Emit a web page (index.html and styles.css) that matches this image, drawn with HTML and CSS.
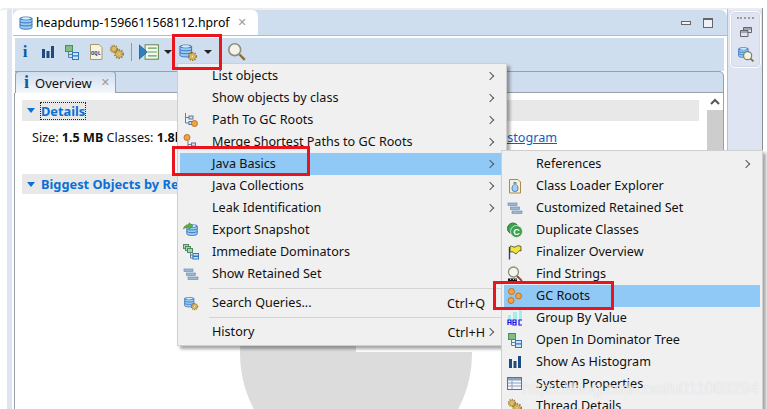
FILE: index.html
```html
<!DOCTYPE html>
<html lang="en">
<head>
    <meta charset="UTF-8">
    <meta name="viewport" content="width=device-width, initial-scale=1.0">
    <title>heapdump-1596611568112.hprof</title>
    <link rel="stylesheet" href="styles.css">
</head>
<body>
    <svg class="defs" width="0" height="0">
        <symbol id="db" viewBox="0 0 16 16">
            <path d="M2 3.500C2 1.500 14 1.500 14 3.500V12.500C14 14.800 2 14.800 2 12.500Z" fill="#9ccbf0" stroke="#1a5fb4" stroke-width=".8"/>
            <path d="M2 6.500C2 8.400 14 8.400 14 6.500M2 9.500C2 11.400 14 11.400 14 9.500M2 3.500C2 5.300 14 5.300 14 3.500" fill="none" stroke="#1a5fb4" stroke-width=".8"/>
            <ellipse cx="8" cy="3.400" rx="4" ry="1.100" fill="#d6eafa"/>
        </symbol>
        <symbol id="gear" viewBox="0 0 16 16">
            <circle cx="8" cy="8" r="5.600" fill="none" stroke="#a07c2c" stroke-width="2.200" stroke-dasharray="2 1.600"/>
            <circle cx="8" cy="8" r="4.400" fill="#edc662" stroke="#8a6a20" stroke-width=".8"/>
            <circle cx="8" cy="8" r="1.700" fill="#fff6dc" stroke="#8a6a20" stroke-width=".7"/>
        </symbol>
        <symbol id="db-gear" viewBox="0 0 18 18">
            <use href="#db" x="0" y="0" width="14" height="16"/>
            <use href="#gear" x="8" y="8" width="10" height="10"/>
        </symbol>
        <symbol id="bars" viewBox="0 0 16 16">
            <path d="M2 5H5V14H2ZM6.500 7H9.500V14H6.500ZM11 2H14V14H11Z" fill="#1f4a7f"/>
        </symbol>
        <symbol id="tree" viewBox="0 0 16 16">
            <rect x="1.500" y="1.500" width="7" height="6" fill="#7fbf7f" stroke="#4e8a6a"/>
            <path d="M4.500 8V13.500H8M4.500 10.500H8" fill="none" stroke="#5f7f9f"/>
            <rect x="8.500" y="8.500" width="6" height="3.500" fill="#cfe4f7" stroke="#2f78c0"/>
            <rect x="8.500" y="12" width="6" height="3.500" fill="#cfe4f7" stroke="#2f78c0"/>
        </symbol>
        <symbol id="gears" viewBox="0 0 16 16">
            <use href="#gear" x="0" y="0" width="10" height="10"/>
            <use href="#gear" x="4" y="4" width="12" height="12"/>
        </symbol>
        <symbol id="path-root" viewBox="0 0 16 16">
            <path d="M2.500 1V11H6M2.500 5.500H6" fill="none" stroke="#5f7f9f"/>
            <rect x="6" y="4" width="4" height="3" fill="#cfe4f7" stroke="#5577a0"/>
            <rect x="6" y="9.500" width="3" height="3" fill="#cfe4f7" stroke="#5577a0"/>
            <circle cx="11.500" cy="11.500" r="3" fill="#f2a34a" stroke="#c0731c"/>
        </symbol>
        <symbol id="path-merge" viewBox="0 0 16 16">
            <circle cx="4" cy="3.500" r="3" fill="#f2a34a" stroke="#c0731c"/>
            <path d="M5 7V15M5 10.500H9" fill="none" stroke="#5f7f9f"/>
            <rect x="8.500" y="9" width="4" height="3" fill="#cfe4f7" stroke="#5577a0"/>
        </symbol>
        <symbol id="retained" viewBox="0 0 16 16">
            <rect x="1" y="3" width="9" height="2.400" fill="#9db8d2" stroke="#5f85aa" stroke-width=".6"/>
            <rect x="3.500" y="7" width="9" height="2.400" fill="#9db8d2" stroke="#5f85aa" stroke-width=".6"/>
            <rect x="5" y="11" width="10" height="2.400" fill="#9db8d2" stroke="#5f85aa" stroke-width=".6"/>
        </symbol>
        <symbol id="export" viewBox="0 0 16 16">
            <use href="#db" x="2" y="0" width="14" height="16"/>
            <path d="M.5 7C1 3.500 4 2.500 6 2.700V.8L10 4 6 7V5C4 5 2 5.500 .5 7Z" fill="#5fb53c" stroke="#3b8a22" stroke-width=".6"/>
        </symbol>
        <symbol id="dominators" viewBox="0 0 16 16">
            <rect x=".5" y=".5" width="5" height="4" fill="#a9d79f" stroke="#4e8a6a"/>
            <rect x="2.500" y="2.500" width="5" height="4" fill="#a9d79f" stroke="#4e8a6a"/>
            <rect x="4.500" y="4.500" width="5" height="4" fill="#a9d79f" stroke="#4e8a6a"/>
            <path d="M7.500 9V14H10M7.500 11H10" fill="none" stroke="#5f7f9f"/>
            <rect x="10" y="9.500" width="5.500" height="2.500" fill="#cfe4f7" stroke="#2f78c0"/>
            <rect x="10" y="12.500" width="5.500" height="2.500" fill="#cfe4f7" stroke="#2f78c0"/>
        </symbol>
        <symbol id="loader" viewBox="0 0 16 16">
            <path d="M2.500 1.500H11L13.500 4V15H2.500Z" fill="#f6efd9" stroke="#a98a4c"/>
            <path d="M7 4.500H9V6.500C11 8 11 10 11 11A3 2.500 0 0 1 5 11C5 10 5 8 7 6.500Z" fill="#a8cfee" stroke="#2f6fae" stroke-width=".8"/>
        </symbol>
        <symbol id="duplicate" viewBox="0 0 16 16">
            <circle cx="6" cy="6.500" r="5.500" fill="#3f9f4f" stroke="#2b7a38"/>
            <circle cx="9.500" cy="9.500" r="6" fill="#3f9f4f" stroke="#e8f3e8" stroke-width=".8"/>
            <text class="glyph-c" x="9.500" y="13">C</text>
        </symbol>
        <symbol id="flag" viewBox="0 0 16 16">
            <path d="M2.500 3V15.500" stroke="#1f4a7f" stroke-width="1.400"/>
            <path d="M3 2.500C5 1 6.500 4 8 3 10 2 11 1 14 2.500V7C12 6 11 8 9 10 7 9 6 7 3 8Z" fill="#f2e43a" stroke="#222" stroke-width=".7"/>
        </symbol>
        <symbol id="strings" viewBox="0 0 16 16">
            <circle cx="6.500" cy="6" r="5" fill="#f3f3ea" stroke="#8d8d80" stroke-width="1.300"/>
            <path d="M10 10L15 15" stroke="#8a4a3a" stroke-width="1.800"/>
            <path d="M1 12.500H10V15.500H1Z" fill="#111"/>
            <path d="M3 13.500H3.800M6 13.500H6.800M8.500 13.500H9.300" stroke="#fff"/>
        </symbol>
        <symbol id="roots" viewBox="0 0 16 16">
            <circle cx="4.500" cy="3.500" r="3" fill="#f2a34a" stroke="#c0731c"/>
            <circle cx="11.500" cy="8" r="3" fill="#f2a34a" stroke="#c0731c"/>
            <circle cx="4" cy="12.500" r="3" fill="#f2a34a" stroke="#c0731c"/>
        </symbol>
        <symbol id="group" viewBox="0 0 16 16">
            <path d="M1 5H4V10H1ZM6 2H10V10H6ZM12 0H15V10H12Z" fill="#a5ecec"/>
            <path d="M1 15V10H4V15M1 12.500H4M6 10H9V15H6ZM6 12.500H9M15 10H12V15H15" fill="none" stroke="#1414e6" stroke-width="1.200"/>
        </symbol>
        <symbol id="table" viewBox="0 0 16 16">
            <rect x=".5" y="1.500" width="14" height="12" fill="#f4f6fa" stroke="#5b7391"/>
            <path d="M1 2H14V4.500H1Z" fill="#8aa2bf"/>
            <path d="M1 7H14M1 10H14M5 4.500V13" stroke="#8aa2bf"/>
        </symbol>
    </svg>

    <div class="window">
        <div class="left-strip"></div>
        <div class="editor">
            <div class="tab-bar">
                <div class="file-tab">
                    <svg class="icon"><use href="#db"/></svg>
                    <span class="file-name">heapdump-1596611568112.hprof</span>
                    <span class="close">&#10005;</span>
                </div>
                <div class="win-btns">
                    <span class="minimize"></span>
                    <span class="maximize"></span>
                </div>
            </div>
            <div class="toolbar">
                <span class="tool tool-info info">i</span>
                <span class="tool tool-bars"><svg class="icon"><use href="#bars"/></svg></span>
                <span class="tool"><svg class="icon"><use href="#tree"/></svg></span>
                <span class="tool">
                    <svg class="icon" viewBox="0 0 16 16">
                        <path d="M2.500 .5H11L14 3.500V15.500H2.500Z" fill="#f6f3e2" stroke="#a89a6c"/>
                        <text class="glyph-oql" x="8" y="11">OQL</text>
                    </svg>
                </span>
                <span class="tool tool-narrow"><svg class="icon"><use href="#gears"/></svg></span>
                <span class="tool-sep"></span>
                <span class="tool">
                    <svg class="icon icon-wide" viewBox="0 0 18 16">
                        <rect x="5.500" y="1.500" width="12" height="13" fill="#f4f8ee" stroke="#6f8f5f"/>
                        <path d="M8 4.500H16M8 8H16M8 11.500H16" stroke="#5fa05f"/>
                        <path d="M0 1.500L7.500 8 0 14.500Z" fill="#2d7fc0" stroke="#1a4f80" stroke-width=".6"/>
                    </svg>
                </span>
                <span class="caret"></span>
                <span class="tool tool-db"><svg class="icon icon-big"><use href="#db-gear"/></svg></span>
                <span class="caret"></span>
                <span class="tool-sep tool-sep-last"></span>
                <span class="tool">
                    <svg class="icon icon-search" viewBox="0 0 16 16">
                        <circle cx="6.500" cy="6.500" r="5" fill="#f3f3ea" stroke="#8d8d80" stroke-width="1.400"/>
                        <path d="M10.500 10.500L15 15" stroke="#8a6a3a" stroke-width="2"/>
                    </svg>
                </span>
            </div>
            <div class="inner-tabs">
                <div class="overview-tab">
                    <span class="info info-small">i</span>
                    <span>Overview</span>
                    <span class="close">&#10005;</span>
                </div>
            </div>
            <div class="content">
                <div class="sections">
                    <div class="section-head section-first">
                        <span class="twist"></span>
                        <span class="section-title focused">Details</span>
                    </div>
                    <div class="size-row">
                        <span>Size: <b>1.5 MB</b> Classes: <b>1.8k</b> Objects: <b>33.9k</b></span>
                        <a class="link" href="#">Histogram</a>
                    </div>
                    <div class="section-head">
                        <span class="twist"></span>
                        <span class="section-title">Biggest Objects by Retained Size</span>
                    </div>
                </div>
                <div class="scrollbar">
                    <div class="scroll-up">
                        <svg width="10" height="7" viewBox="0 0 10 7"><path d="M1 6L5 2 9 6" fill="none" stroke="#555" stroke-width="2"/></svg>
                    </div>
                    <div class="scroll-thumb"></div>
                </div>
            </div>
        </div>
        <div class="side">
            <div class="side-box">
                <span class="grip"></span>
                <svg class="restore" width="12" height="10" viewBox="0 0 12 10">
                    <path d="M3.500 3V.5H11.500V5.500H8M.5 3.500H8V9.500H.5ZM.5 5H8M3.500 2H11.500" fill="none" stroke="#666"/>
                </svg>
                <svg class="side-icon" viewBox="0 0 16 16">
                    <use href="#db" x="0" y="0" width="12" height="14"/>
                    <circle cx="10" cy="10" r="3.800" fill="#f3f3ea" stroke="#7d7d60" stroke-width="1.100"/>
                    <path d="M12.800 12.800L15.500 15.500" stroke="#8a6a3a" stroke-width="1.600"/>
                </svg>
            </div>
        </div>
        <div class="right-edge"></div>
    </div>

    <svg class="pie" width="232" height="64" viewBox="0 0 232 64">
        <clipPath id="pie-clip"><circle cx="116" cy="8" r="116"/></clipPath>
        <path d="M0 0H116V6H232V64H0Z" fill="#dcdcdc" clip-path="url(#pie-clip)"/>
    </svg>

    <div class="menu main-menu">
        <div class="item"><span class="gutter"></span><span class="label">List objects</span><span class="arrow"></span></div>
        <div class="item"><span class="gutter"></span><span class="label">Show objects by class</span><span class="arrow"></span></div>
        <div class="item"><span class="gutter"><svg class="icon"><use href="#path-root"/></svg></span><span class="label">Path To GC Roots</span><span class="arrow"></span></div>
        <div class="item"><span class="gutter"><svg class="icon"><use href="#path-merge"/></svg></span><span class="label">Merge Shortest Paths to GC Roots</span><span class="arrow"></span></div>
        <div class="item active"><span class="gutter"></span><span class="label">Java Basics</span><span class="arrow"></span></div>
        <div class="item"><span class="gutter"></span><span class="label">Java Collections</span><span class="arrow"></span></div>
        <div class="item"><span class="gutter"></span><span class="label">Leak Identification</span><span class="arrow"></span></div>
        <div class="item"><span class="gutter"><svg class="icon"><use href="#export"/></svg></span><span class="label">Export Snapshot</span></div>
        <div class="item"><span class="gutter"><svg class="icon"><use href="#dominators"/></svg></span><span class="label">Immediate Dominators</span></div>
        <div class="item"><span class="gutter"><svg class="icon"><use href="#retained"/></svg></span><span class="label">Show Retained Set</span></div>
        <div class="sep"></div>
        <div class="item"><span class="gutter"><svg class="icon"><use href="#db-gear"/></svg></span><span class="label">Search Queries...</span><span class="shortcut">Ctrl+Q</span><span class="arrow arrow-none"></span></div>
        <div class="sep"></div>
        <div class="item"><span class="gutter"></span><span class="label">History</span><span class="shortcut">Ctrl+H</span><span class="arrow"></span></div>
    </div>

    <div class="menu sub-menu">
        <div class="item"><span class="gutter"></span><span class="label">References</span><span class="arrow"></span></div>
        <div class="item"><span class="gutter"><svg class="icon"><use href="#loader"/></svg></span><span class="label">Class Loader Explorer</span></div>
        <div class="item"><span class="gutter"><svg class="icon"><use href="#retained"/></svg></span><span class="label">Customized Retained Set</span></div>
        <div class="item"><span class="gutter"><svg class="icon"><use href="#duplicate"/></svg></span><span class="label">Duplicate Classes</span></div>
        <div class="item"><span class="gutter"><svg class="icon"><use href="#flag"/></svg></span><span class="label">Finalizer Overview</span></div>
        <div class="item"><span class="gutter"><svg class="icon"><use href="#strings"/></svg></span><span class="label">Find Strings</span></div>
        <div class="item active"><span class="gutter"><svg class="icon"><use href="#roots"/></svg></span><span class="label">GC Roots</span></div>
        <div class="item"><span class="gutter"><svg class="icon"><use href="#group"/></svg></span><span class="label">Group By Value</span></div>
        <div class="item"><span class="gutter"><svg class="icon"><use href="#tree"/></svg></span><span class="label">Open In Dominator Tree</span></div>
        <div class="item"><span class="gutter"><svg class="icon"><use href="#bars"/></svg></span><span class="label">Show As Histogram</span></div>
        <div class="item"><span class="gutter"><svg class="icon"><use href="#table"/></svg></span><span class="label">System Properties</span></div>
        <div class="item"><span class="gutter"><svg class="icon"><use href="#gears"/></svg></span><span class="label">Thread Details</span></div>
    </div>

    <div class="mark mark-toolbar"></div>
    <div class="mark mark-java"></div>
    <div class="mark mark-roots"></div>
    <div class="watermark">https://blog.csdn.net/u011069294</div>
</body>
</html>
```

FILE: styles.css
```css
* {
    box-sizing: border-box;
}

html, body {
    height: 100%;
}

body {
    margin: 0;
    position: relative;
    overflow: hidden;
    background: #fff;
    color: #111;
    font-family: "Noto Sans", "Open Sans", sans-serif;
    font-size: 12.6px;
}

.defs {
    position: absolute;
}

.glyph-c {
    font: bold 9px "Liberation Sans", sans-serif;
    fill: #fff;
    text-anchor: middle;
}

.glyph-oql {
    font: bold 5.5px "Liberation Mono", monospace;
    fill: #1f3f7f;
    text-anchor: middle;
}

.icon {
    display: block;
    width: 16px;
    height: 16px;
}

.icon-wide {
    width: 20px;
    height: 18px;
}

.icon-big {
    width: 20px;
    height: 20px;
}

.icon-search {
    width: 19px;
    height: 19px;
}

/* window frame */
.window {
    display: flex;
    height: 100%;
    padding-top: 8px;
}

.left-strip {
    width: 12px;
    flex: none;
    border-top: 2px solid #ededed;
    border-right: 5px solid #dfe4f3;
    border-top-left-radius: 4px;
}

.editor {
    width: 716px;
    flex: none;
    border-top: 2px solid #ededed;
    border-left: 1px solid #fff;
    border-right: 1px solid #b9bfc9;
    display: flex;
    flex-direction: column;
    position: relative;
}

.tab-bar {
    height: 26px;
    display: flex;
    justify-content: space-between;
    background: #cfdeee;
    border-top-right-radius: 7px;
    border-bottom: 1px solid #b5b9c0;
}

.file-tab {
    width: 245px;
    background: #fff;
    border-top-left-radius: 6px;
    border-top-right-radius: 6px;
    display: flex;
    align-items: center;
    padding-left: 5px;
    gap: 2px;
}

.file-name {
    font-size: 12.3px;
    color: #000;
    white-space: nowrap;
}

.close {
    color: #9a9a9a;
    font-size: 11px;
    font-family: "DejaVu Sans", sans-serif;
    margin-left: 6px;
}

.win-btns {
    display: flex;
    align-items: center;
    gap: 12px;
    padding-right: 14px;
}

.minimize {
    width: 10px;
    height: 4px;
    border: 1px solid #666;
    background: #eef2f8;
}

.maximize {
    width: 10px;
    height: 10px;
    border: 1px solid #666;
    border-top-width: 2px;
    background: #eef2f8;
}

.toolbar {
    margin: 2px 3px 0 2px;
    height: 33px;
    background: #cfdeee;
    display: flex;
    align-items: center;
    padding-bottom: 6px;
}

.tool {
    width: 24px;
    flex: none;
    display: flex;
    justify-content: center;
    align-items: center;
}

.tool-info {
    width: 20px;
}

.tool-bars {
    margin-left: 1px;
}

.tool-narrow {
    width: 18px;
}

.tool-db {
    margin-left: 3px;
    width: 26px;
}

.info {
    color: #0f5c9c;
    font: bold 17px "Liberation Serif", serif;
}

.info-small {
    font-size: 18px;
}

.tool-sep {
    width: 1px;
    height: 18px;
    background: #8e99a6;
    margin: 0 5px;
}

.tool-sep-last {
    margin: 0 4px 0 7px;
}

.caret {
    width: 8px;
    height: 4px;
    flex: none;
    border: 4px solid transparent;
    border-top: 4px solid #222;
    border-bottom: 0;
    margin-left: 3px;
}

.inner-tabs {
    margin: 0 3px 0 2px;
    height: 22px;
    background: #cfdeee;
    border-top: 1px solid #9aa0a8;
    border-right: 1px solid #9aa0a8;
    border-bottom: 1px solid #9aa0a8;
    border-top-right-radius: 5px;
    display: flex;
}

.overview-tab {
    width: 101px;
    height: 22px;
    margin-top: -1px;
    display: flex;
    align-items: center;
    gap: 6px;
    padding-left: 8px;
    background: linear-gradient(#cfdeee, #f4f7fb);
    border: 1px solid #9aa0a8;
    border-bottom: 0;
    border-top-left-radius: 4px;
    border-top-right-radius: 4px;
    font-size: 13px;
}

.overview-tab .close {
    margin-left: 3px;
}

.content {
    flex: 1;
    display: flex;
    margin: 0 3px 0 1px;
    border-right: 1px solid #9aa0a8;
    border-left: 1px solid #9aa0a8;
    background: #fff;
}

.sections {
    flex: 1;
    padding: 7px 8px 0 7px;
}

.section-head {
    height: 20px;
    background: #e8e8e8;
    display: flex;
    align-items: center;
    gap: 6px;
    padding-left: 5px;
}

.section-first {
    height: 21px;
}

.twist {
    width: 8px;
    height: 5px;
    flex: none;
    border: 4px solid transparent;
    border-top: 5px solid #0a6fd6;
    border-bottom: 0;
}

.section-title {
    color: #0a6fd6;
    font-weight: 700;
    font-size: 12.8px;
    white-space: nowrap;
}

.focused {
    outline: 1px dotted #222;
    line-height: 16px;
}

.size-row {
    width: 535px;
    height: 53px;
    padding: 8px 0 0 10px;
    display: flex;
    justify-content: space-between;
    white-space: nowrap;
}

.link {
    color: #0a5fc4;
    text-decoration: underline;
}

.scrollbar {
    width: 16px;
    flex: none;
}

.scroll-up {
    height: 17px;
    display: flex;
    justify-content: center;
    align-items: center;
}

.scroll-thumb {
    height: 290px;
    background: #cdcdcd;
}

.side {
    width: 34px;
    flex: none;
    background: #dfe4f3;
    border-top: 2px solid #ededed;
    padding: 1px 1px 0 2px;
}

.side-box {
    height: 57px;
    background: #dfe4f3;
    border: 1px solid #fff;
    border-radius: 5px;
    outline: 1px solid #d5d9e6;
    outline-offset: -2px;
    display: flex;
    flex-direction: column;
    align-items: center;
}

.grip {
    width: 17px;
    margin-top: 5px;
    border-top: 2px dotted #9c9c9c;
}

.restore {
    margin-top: 8px;
}

.side-icon {
    width: 17px;
    height: 17px;
    margin-top: 8px;
}

.right-edge {
    width: 1px;
    flex: none;
    background: #8a8f96;
}

/* things lying over the editor */
.pie {
    position: absolute;
    left: 240px;
    top: 346px;
}

.menu {
    position: absolute;
    background: #f0f0f0;
    border: 1px solid #cfcfcf;
    box-shadow: 3px 3px 3px rgba(0, 0, 0, 0.35);
    padding: 1px 2px;
}

.main-menu {
    left: 177px;
    top: 63px;
    width: 330px;
    height: 283px;
}

.sub-menu {
    left: 501px;
    top: 150px;
    width: 262px;
    height: 270px;
    padding-top: 2px;
}

.item {
    height: 22px;
    display: flex;
    align-items: center;
    padding-right: 10px;
}

.item.active {
    background: #90c8f6;
}

.gutter {
    width: 32px;
    flex: none;
    padding-left: 3px;
}

.label {
    flex: 1;
    white-space: nowrap;
    line-height: 21px;
    align-self: flex-start;
}

.shortcut {
    margin-right: 2px;
}

.arrow {
    width: 6px;
    height: 6px;
    margin-right: 1px;
    border-top: 1px solid #555;
    border-right: 1px solid #555;
    transform: rotate(45deg);
}

.arrow-none {
    visibility: hidden;
}

.sep {
    height: 7px;
    margin-left: 29px;
    display: flex;
    align-items: center;
}

.sep::before {
    content: "";
    flex: 1;
    border-top: 1px solid #d4d4d4;
}

.mark {
    position: absolute;
    border: 3px solid #e8141e;
}

.mark-toolbar {
    left: 172px;
    top: 34px;
    width: 50px;
    height: 36px;
}

.mark-java {
    left: 172px;
    top: 146px;
    width: 138px;
    height: 30px;
}

.mark-roots {
    left: 493px;
    top: 281px;
    width: 121px;
    height: 29px;
}

.watermark {
    position: absolute;
    left: 523px;
    top: 380px;
    color: rgba(255, 255, 255, 0.7);
    font: 16px "Liberation Sans", sans-serif;
    text-shadow: 0 0 1px rgba(120, 120, 120, 0.3);
}
```
